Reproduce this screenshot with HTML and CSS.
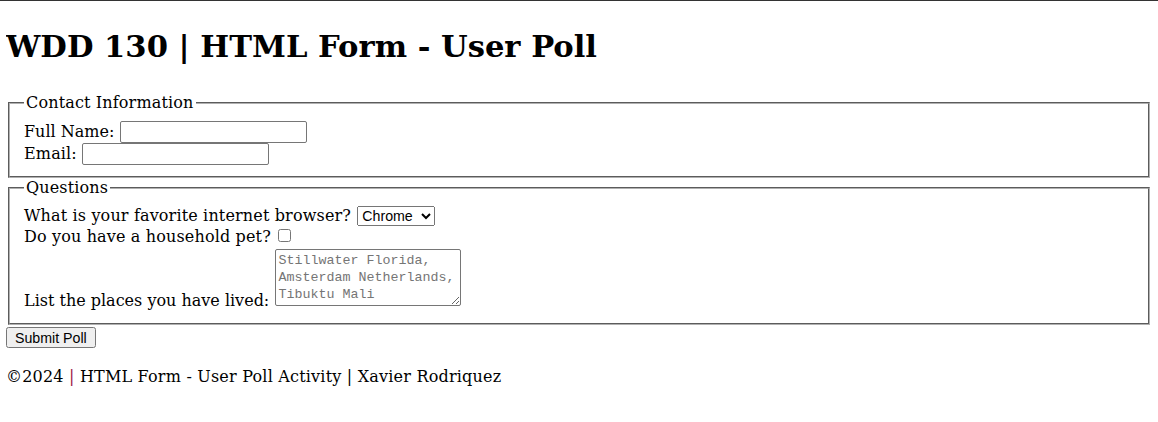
FILE: index.html
```html
<!DOCTYPE html>
<html lang="en">
<head>
<meta charset="utf-8">
<title>WDD 130 | HTML Form - User Poll</title>
<link rel="stylesheet" href="styles.css">
</head>
<body>
<header>
  <h1 class="title">WDD 130 | HTML Form - User Poll</h1>
</header>
<main>
  <form class="poll">
    <fieldset class="group group-contact">
      <legend>Contact Information</legend>
      <label for="fullname" class="tight">Full Name:</label> <input class="field" type="text" id="fullname" name="fullname"><br>
      <label for="email">Email:</label> <input class="field" type="email" id="email" name="email"><br>
    </fieldset>
    <fieldset class="group group-questions">
      <legend>Questions</legend>
      <label for="browser">What is your favorite internet browser?</label> <select id="browser" name="browser" class="choice">
        <option>Chrome</option>
        <option>Firefox</option>
        <option>Edge</option>
        <option>Safari</option>
      </select><br>
      <label for="pet">Do you have a household pet?</label> <input type="checkbox" id="pet" name="pet" class="check"><br>
      <label for="places" class="tight">List the places you have lived:</label> <textarea id="places" name="places" class="places" rows="3" cols="20" placeholder="Stillwater Florida,&#10;Amsterdam Netherlands,&#10;Tibuktu Mali"></textarea>
    </fieldset>
    <input type="submit" value="Submit Poll" class="submit">
  </form>
</main>
<footer>
  <p class="credits">&copy;2024 <span class="accent">|</span> HTML Form - User Poll Activity | Xavier Rodriquez</p>
</footer>
</body>
</html>
```

FILE: styles.css
```css
html {
  border-top: 1px solid #333;
}
body {
  margin: 0 6px;
  font-family: "DejaVu Serif", "Liberation Serif", serif;
  font-size: 16px;
  line-height: 1.25;
  color: #000;
  background: #fff;
}
.title {
  font-size: 30.6px;
  line-height: 40px;
  margin: 25px 0 27px;
}
.group {
  margin: 0 2px;
  padding: 8px 12px 11px 14px;
  border: 2px groove #b0b0b0;
  letter-spacing: 0.15px;
}
.group-questions {
  padding-bottom: 12px;
}
.group legend {
  padding: 0 2px;
}
.tight {
  letter-spacing: 0;
}
.field {
  width: 187px;
  height: 22px;
  box-sizing: border-box;
  border: 1px solid #767676;
  border-radius: 2px;
}
.choice,
.submit {
  font-family: "Liberation Sans", Arial, sans-serif;
  font-size: 14.2px;
  letter-spacing: 0;
}
.choice {
  height: 20px;
  width: 78px;
  margin-left: 1px;
}
.check {
  margin: 3px 4px 7px 2px;
}
.submit {
  height: 21px;
  padding: 0 7px;
  margin-top: 2px;
}
.places {
  font-family: "Liberation Mono", monospace;
  font-size: 13.33px;
  line-height: 17px;
  letter-spacing: 0;
  width: 186px;
  height: 57px;
  box-sizing: border-box;
  padding: 2px 3px;
  border: 1px solid #767676;
  border-radius: 2px;
}
.places::placeholder {
  color: #757575;
}
.credits {
  margin: 19px 0;
  letter-spacing: 0.2px;
}
.accent {
  color: #9b1446;
}
```
